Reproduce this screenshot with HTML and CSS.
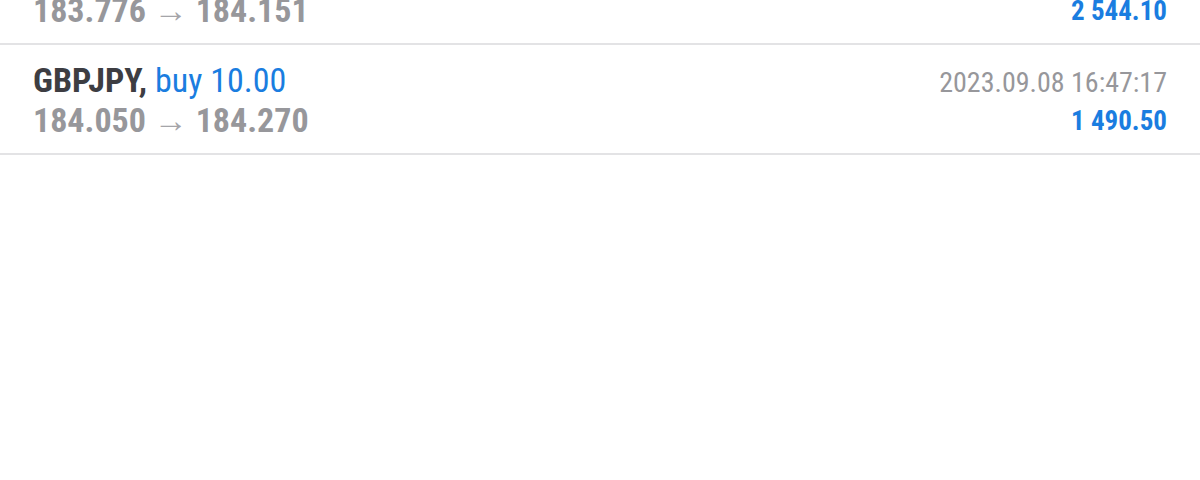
FILE: index.html
```html
<!DOCTYPE html>
<html>
<head>
<meta charset="utf-8">
<link rel="stylesheet" href="styles.css">
</head>
<body>
<div class="list">
  <div class="row">
    <div class="left">
      <div class="title"><span class="sym">GBPJPY,</span> <span class="side">buy 10.00</span></div>
      <div class="prices">183.776 <span class="arrow">→</span> 184.151</div>
    </div>
    <div class="right">
      <div class="time">2023.09.08 16:40:02</div>
      <div class="profit">2 544.10</div>
    </div>
  </div>
  <div class="row">
    <div class="left">
      <div class="title"><span class="sym">GBPJPY,</span> <span class="side">buy 10.00</span></div>
      <div class="prices">184.050 <span class="arrow">→</span> 184.270</div>
    </div>
    <div class="right">
      <div class="time">2023.09.08 16:47:17</div>
      <div class="profit">1 490.50</div>
    </div>
  </div>
</div>
</body>
</html>
```
FILE: styles.css
```css
html, body {
  margin: 0;
  padding: 0;
  background: #ffffff;
}
body {
  font-family: "Roboto Condensed", Roboto, "Liberation Sans", sans-serif;
  overflow: hidden;
}
.list {
  margin-top: -65px;
}
.row {
  display: flex;
  justify-content: space-between;
  height: 80px;
  padding: 15px 33px 13px;
  border-bottom: 2px solid #e3e3e5;
}
.left {
  display: flex;
  flex-direction: column;
}
.title {
  font-size: 34px;
  line-height: 40px;
  white-space: nowrap;
}
.sym {
  font-weight: 700;
  color: #3d3d42;
}
.side {
  color: #1a7de0;
}
.prices {
  font-size: 34px;
  line-height: 40px;
  font-weight: 700;
  color: #97979b;
  white-space: nowrap;
}
.arrow {
  font-weight: 400;
  color: #a5a5a9;
}
.right {
  display: flex;
  flex-direction: column;
  align-items: flex-end;
  padding-top: 5px;
}
.time {
  font-size: 28px;
  line-height: 36px;
  color: #97979b;
  white-space: nowrap;
}
.profit {
  margin-top: 3px;
  font-size: 27px;
  line-height: 34px;
  font-weight: 700;
  color: #1a7de0;
  white-space: nowrap;
}
```
